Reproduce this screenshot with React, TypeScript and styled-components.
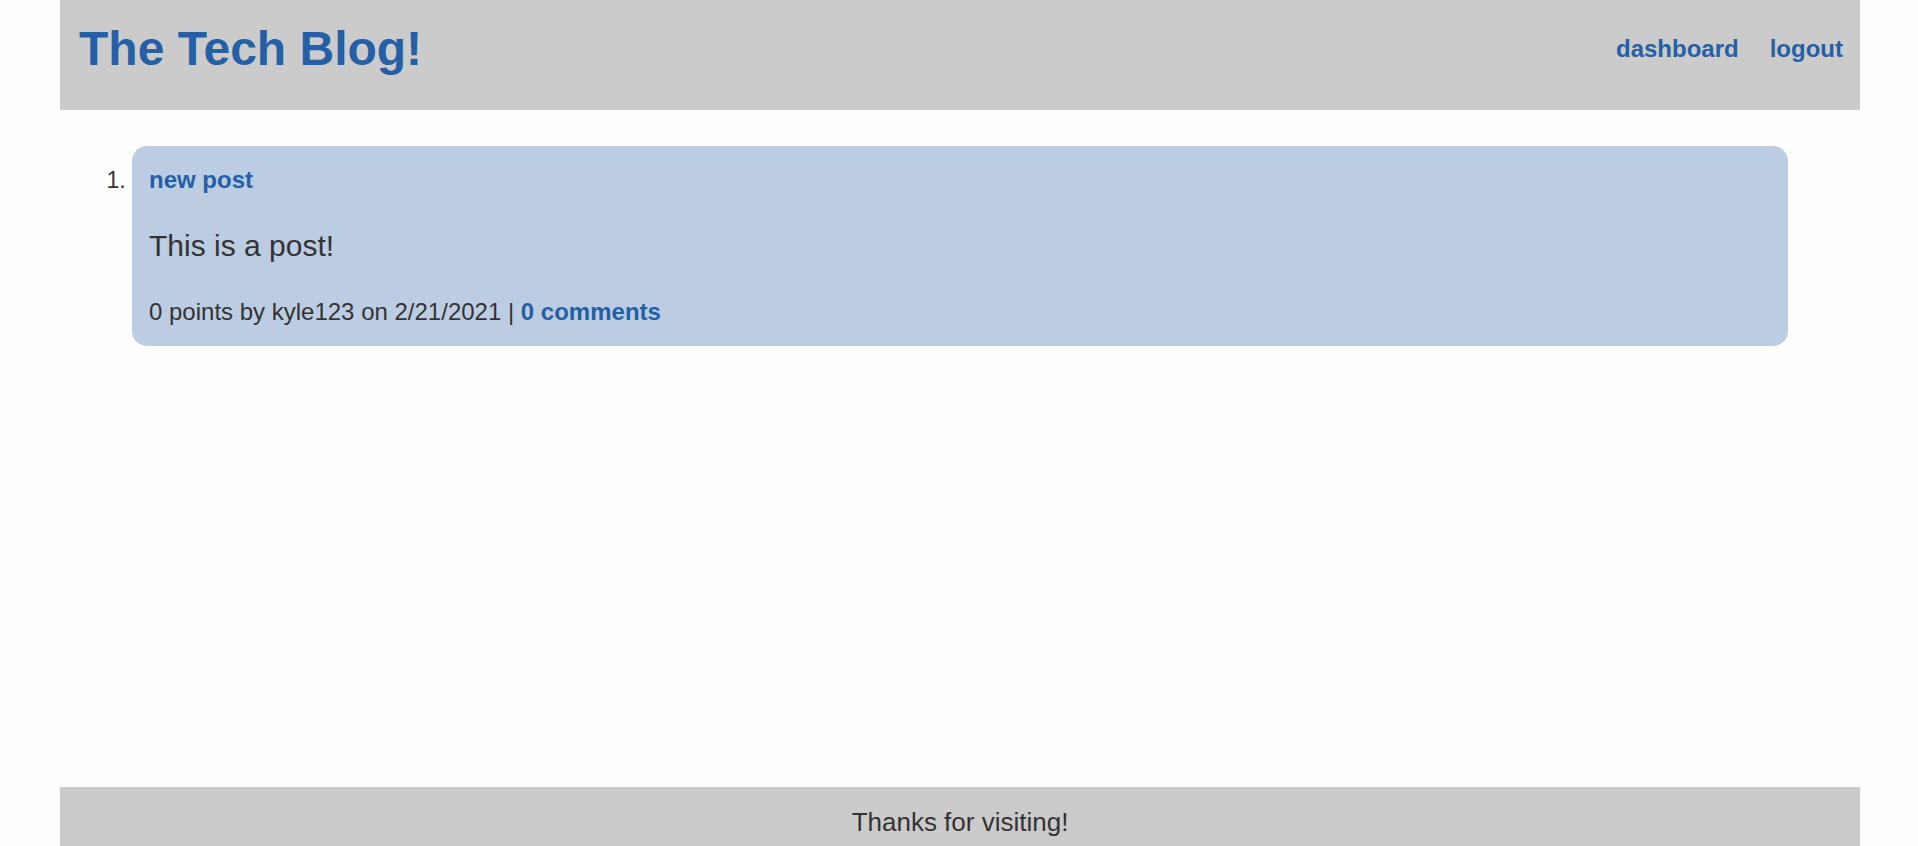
import React from "react";
import styled, { createGlobalStyle } from "styled-components";

const GlobalStyle = createGlobalStyle`
  html, body {
    margin: 0;
    padding: 0;
    background: #fefefe;
  }
  body {
    font-family: "Liberation Sans", Arial, Helvetica, sans-serif;
    color: #333333;
  }
  * { box-sizing: border-box; }
`;

const Page = styled.div`
  width: 1800px;
  margin-left: 60px;
  min-height: 846px;
  display: flex;
  flex-direction: column;
`;

const Header = styled.header`
  background: #cbcbcb;
  height: 110px;
  padding: 21px 17px 34px 19px;
  display: flex;
  align-items: center;
  justify-content: space-between;
`;

const SiteTitle = styled.h1`
  margin: 0;
  font-size: 48px;
  font-weight: 700;
  line-height: normal;
  color: #255fa6;
`;

const Nav = styled.nav`
  display: flex;
  gap: 31px;
`;

const NavLink = styled.a`
  font-size: 24px;
  font-weight: 700;
  color: #255fa6;
  text-decoration: none;
  cursor: pointer;
`;

const Main = styled.main`
  flex: 1;
  padding: 36px 32px 0;
`;

const PostList = styled.ol`
  margin: 0;
  padding: 0 40px;
  font-size: 23px;
  color: #333333;
`;

const PostItem = styled.li`
  background: #bccde3;
  border-radius: 15px;
  padding: 20px 17px 20px 17px;
  &::marker {
    font-size: 23px;
  }
`;

const PostTitle = styled.a`
  display: block;
  font-size: 24px;
  font-weight: 700;
  color: #255fa6;
  text-decoration: none;
  line-height: normal;
`;

const PostBody = styled.p`
  margin: 35px 0 35px;
  font-size: 30px;
  line-height: normal;
  color: #333333;
`;

const PostMeta = styled.p`
  margin: 0;
  font-size: 24px;
  line-height: normal;
  color: #333333;
`;

const MetaLink = styled.a`
  font-weight: 700;
  color: #255fa6;
  text-decoration: none;
`;

const Footer = styled.footer`
  background: #cbcbcb;
  padding: 20px 0 8px;
  text-align: center;
  font-size: 26px;
  line-height: normal;
  color: #333333;
`;

export default function App() {
  return (
    <>
      <GlobalStyle />
      <Page>
        <Header>
          <SiteTitle>The Tech Blog!</SiteTitle>
          <Nav>
            <NavLink>dashboard</NavLink>
            <NavLink>logout</NavLink>
          </Nav>
        </Header>
        <Main>
          <PostList>
            <PostItem>
              <PostTitle>new post</PostTitle>
              <PostBody>This is a post!</PostBody>
              <PostMeta>
                0 points by kyle123 on 2/21/2021 | <MetaLink>0 comments</MetaLink>
              </PostMeta>
            </PostItem>
          </PostList>
        </Main>
        <Footer>Thanks for visiting!</Footer>
      </Page>
    </>
  );
}
